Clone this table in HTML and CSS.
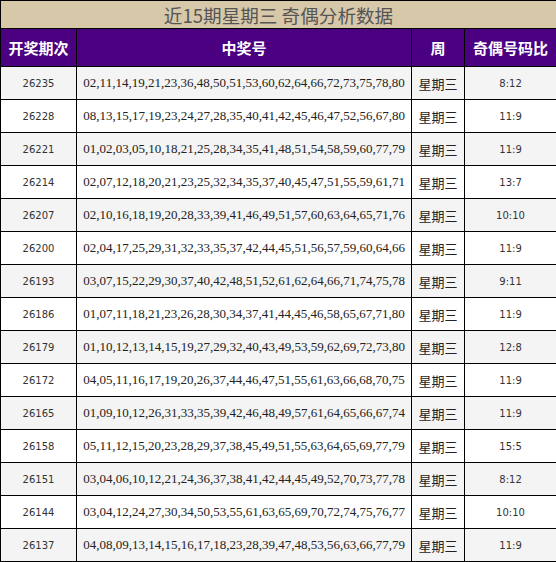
FILE: index.html
```html
<!DOCTYPE html>
<html lang="zh-CN">
<head>
<meta charset="utf-8">
<title>近15期星期三 奇偶分析数据</title>
<link rel="stylesheet" href="styles.css">
</head>
<body>
<table class="data">
  <colgroup>
    <col class="c-no">
    <col class="c-nums">
    <col class="c-week">
    <col class="c-ratio">
  </colgroup>
  <thead>
    <tr><th class="title" colspan="4">近15期星期三 奇偶分析数据</th></tr>
    <tr class="head">
      <th>开奖期次</th>
      <th>中奖号</th>
      <th>周</th>
      <th>奇偶号码比</th>
    </tr>
  </thead>
  <tbody>
    <tr class="odd"><td class="no">26235</td><td class="nums">02,11,14,19,21,23,36,48,50,51,53,60,62,64,66,72,73,75,78,80</td><td class="week">星期三</td><td class="ratio">8:12</td></tr>
    <tr><td class="no">26228</td><td class="nums">08,13,15,17,19,23,24,27,28,35,40,41,42,45,46,47,52,56,67,80</td><td class="week">星期三</td><td class="ratio">11:9</td></tr>
    <tr class="odd"><td class="no">26221</td><td class="nums">01,02,03,05,10,18,21,25,28,34,35,41,48,51,54,58,59,60,77,79</td><td class="week">星期三</td><td class="ratio">11:9</td></tr>
    <tr><td class="no">26214</td><td class="nums">02,07,12,18,20,21,23,25,32,34,35,37,40,45,47,51,55,59,61,71</td><td class="week">星期三</td><td class="ratio">13:7</td></tr>
    <tr class="odd"><td class="no">26207</td><td class="nums">02,10,16,18,19,20,28,33,39,41,46,49,51,57,60,63,64,65,71,76</td><td class="week">星期三</td><td class="ratio">10:10</td></tr>
    <tr><td class="no">26200</td><td class="nums">02,04,17,25,29,31,32,33,35,37,42,44,45,51,56,57,59,60,64,66</td><td class="week">星期三</td><td class="ratio">11:9</td></tr>
    <tr class="odd"><td class="no">26193</td><td class="nums">03,07,15,22,29,30,37,40,42,48,51,52,61,62,64,66,71,74,75,78</td><td class="week">星期三</td><td class="ratio">9:11</td></tr>
    <tr><td class="no">26186</td><td class="nums">01,07,11,18,21,23,26,28,30,34,37,41,44,45,46,58,65,67,71,80</td><td class="week">星期三</td><td class="ratio">11:9</td></tr>
    <tr class="odd"><td class="no">26179</td><td class="nums">01,10,12,13,14,15,19,27,29,32,40,43,49,53,59,62,69,72,73,80</td><td class="week">星期三</td><td class="ratio">12:8</td></tr>
    <tr><td class="no">26172</td><td class="nums">04,05,11,16,17,19,20,26,37,44,46,47,51,55,61,63,66,68,70,75</td><td class="week">星期三</td><td class="ratio">11:9</td></tr>
    <tr class="odd"><td class="no">26165</td><td class="nums">01,09,10,12,26,31,33,35,39,42,46,48,49,57,61,64,65,66,67,74</td><td class="week">星期三</td><td class="ratio">11:9</td></tr>
    <tr><td class="no">26158</td><td class="nums">05,11,12,15,20,23,28,29,37,38,45,49,51,55,63,64,65,69,77,79</td><td class="week">星期三</td><td class="ratio">15:5</td></tr>
    <tr class="odd"><td class="no">26151</td><td class="nums">03,04,06,10,12,21,24,36,37,38,41,42,44,45,49,52,70,73,77,78</td><td class="week">星期三</td><td class="ratio">8:12</td></tr>
    <tr><td class="no">26144</td><td class="nums">03,04,12,24,27,30,34,50,53,55,61,63,65,69,70,72,74,75,76,77</td><td class="week">星期三</td><td class="ratio">10:10</td></tr>
    <tr class="odd"><td class="no">26137</td><td class="nums">04,08,09,13,14,15,16,17,18,23,28,39,47,48,53,56,63,66,77,79</td><td class="week">星期三</td><td class="ratio">11:9</td></tr>
  </tbody>
</table>
</body>
</html>
```

FILE: styles.css
```css
html, body {
  margin: 0;
  padding: 0;
  background: #ffffff;
}

.data {
  width: 556px;
  border-collapse: collapse;
  table-layout: fixed;
  font-family: "DejaVu Sans", "Noto Sans CJK SC", sans-serif;
  color: #222;
}

.c-no { width: 76px; }
.c-nums { width: 335px; }
.c-week { width: 53px; }
.c-ratio { width: 92px; }

.data th,
.data td {
  border: 1px solid #000;
  padding: 0;
  text-align: center;
  vertical-align: middle;
}

.title {
  height: 27px;
  background: #d8c8aa;
  color: #555;
  font-family: "Noto Sans CJK SC", sans-serif;
  font-size: 18.6px;
  font-weight: normal;
  line-height: 27px;
}

.head th {
  height: 37px;
  background: #4b0082;
  color: #fff;
  font-family: "Noto Sans CJK SC", sans-serif;
  font-size: 15px;
  font-weight: bold;
}

.data td {
  height: 32px;
  background: #fff;
}

.data tr.odd td {
  background: #f4f4f4;
}

.no, .ratio {
  font-size: 10px;
  font-family: "DejaVu Sans", sans-serif;
  color: #333;
}

.nums {
  font-family: "Liberation Serif", serif;
  font-size: 13px;
}

.week {
  font-family: "Noto Sans CJK SC", sans-serif;
  font-size: 13px;
  padding-top: 2px;
}
```
